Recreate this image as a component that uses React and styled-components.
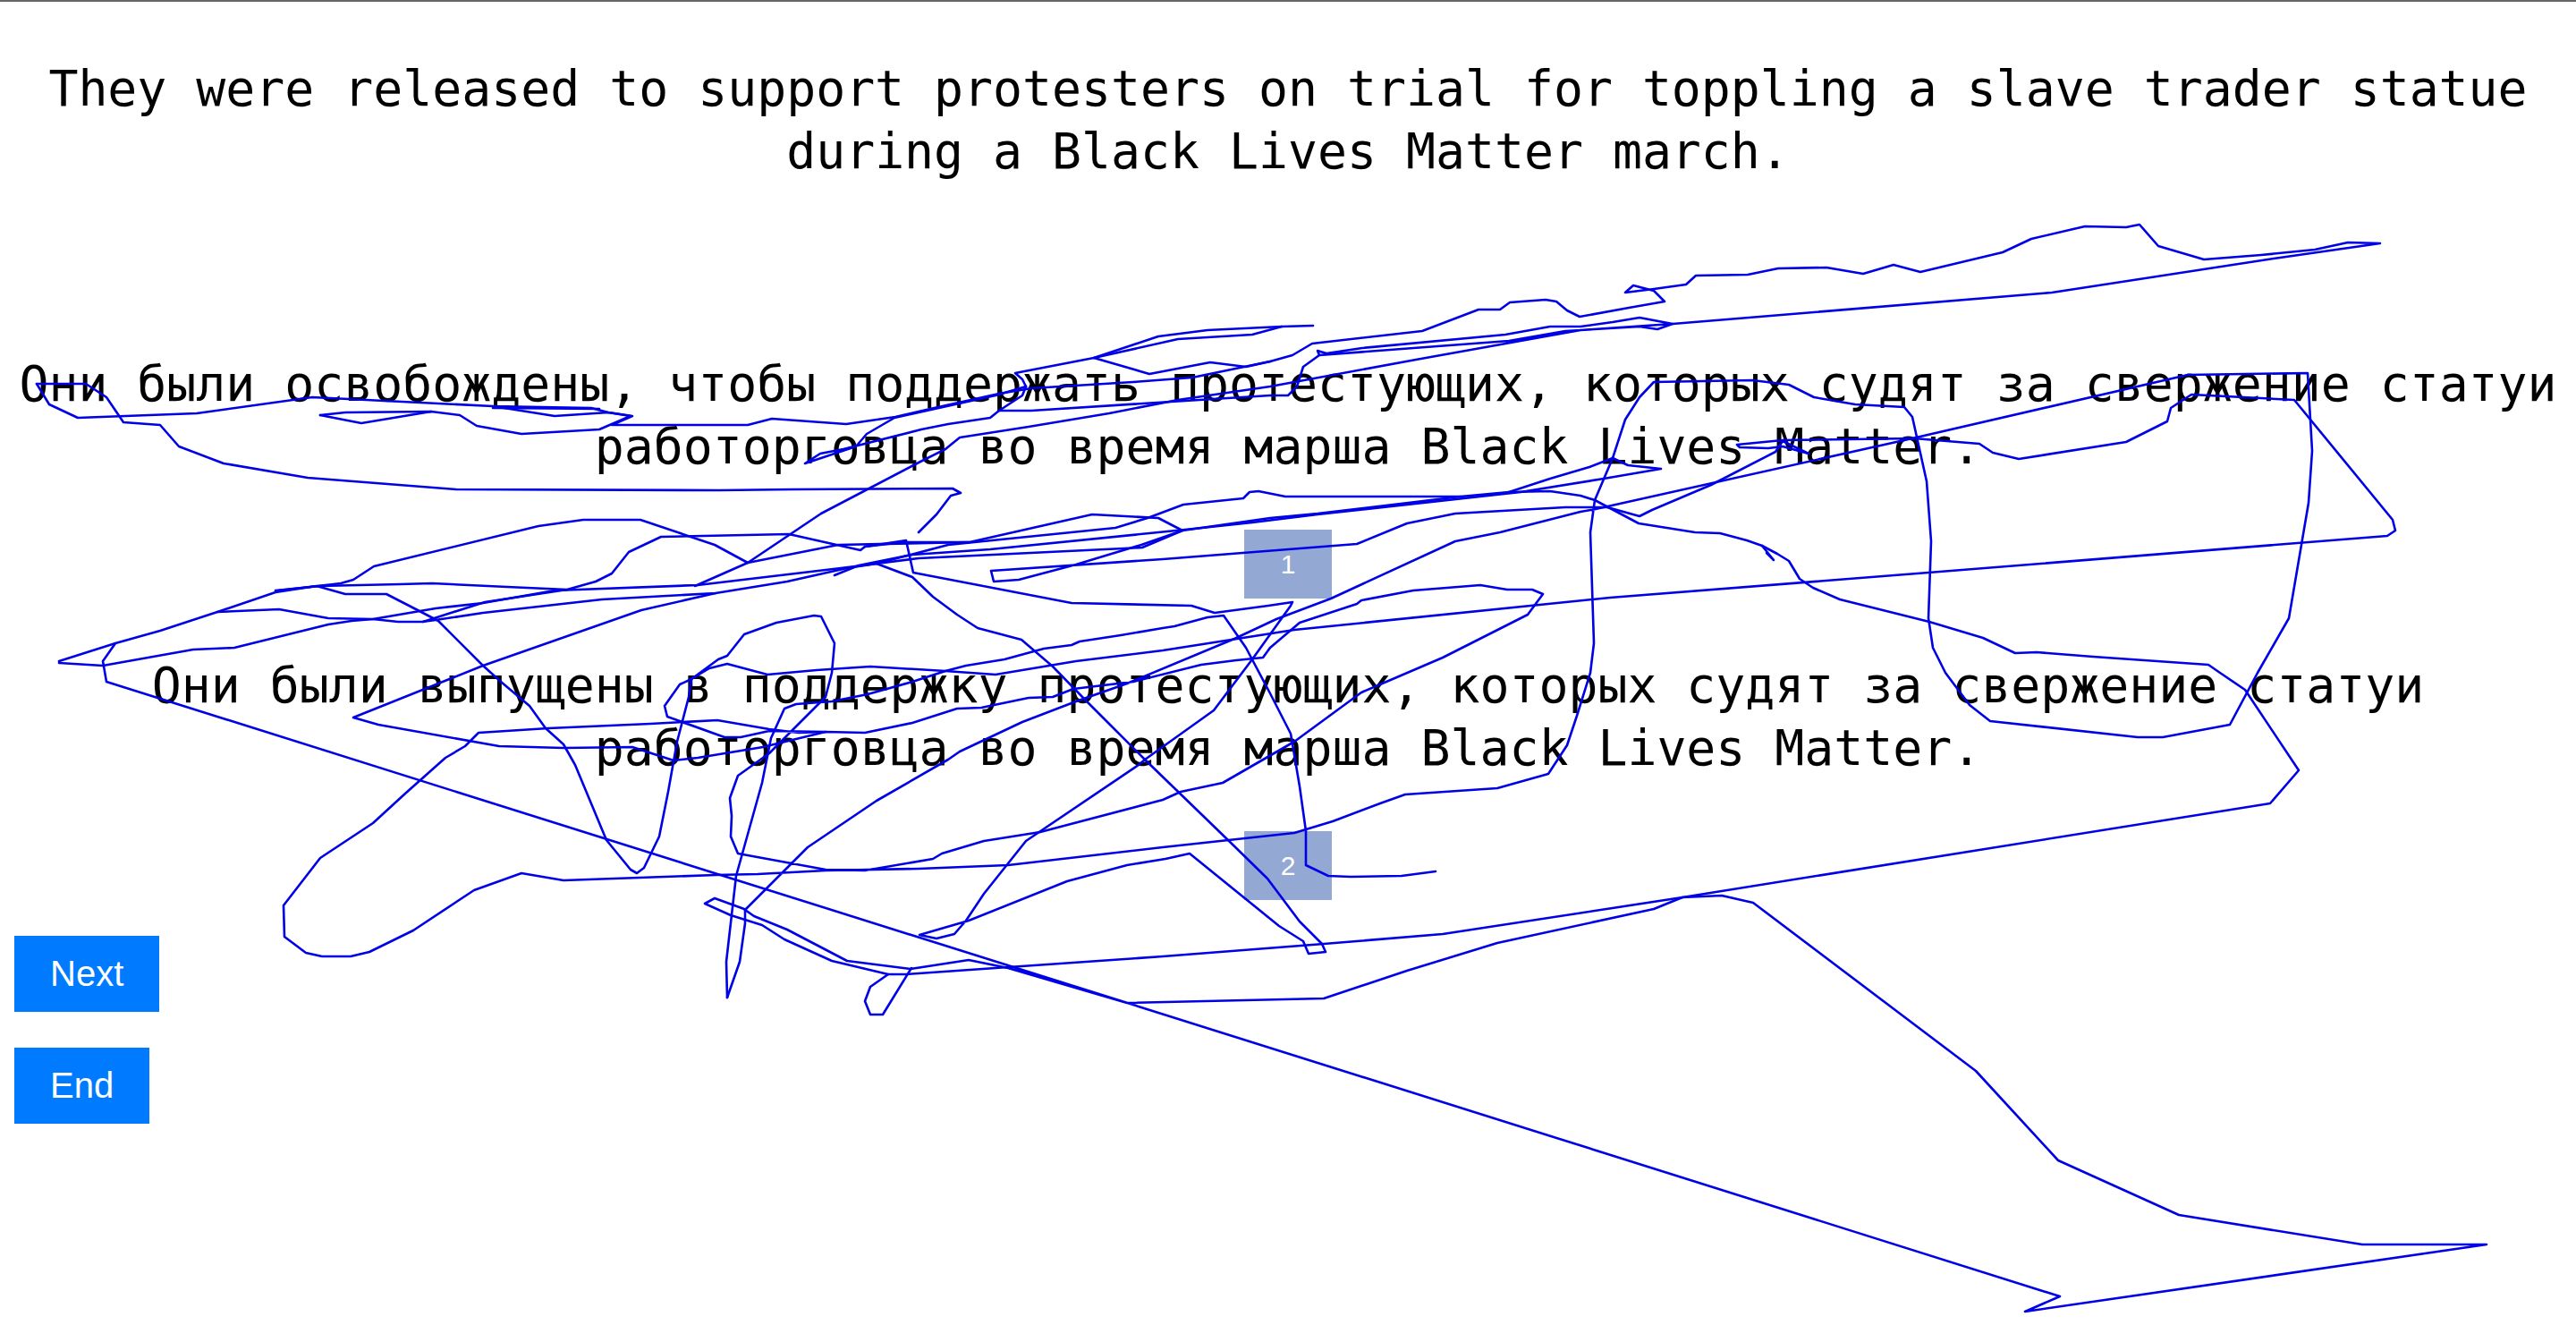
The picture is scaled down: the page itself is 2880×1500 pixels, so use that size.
import React from 'react';
import styled, { createGlobalStyle } from 'styled-components';

const GlobalStyle = createGlobalStyle`
    html,body{margin:0;padding:0;background:#fff;}
    #root{position:relative;min-height:1500px;}
`;

const Page = styled.div`
    position:relative;width:100%;height:1500px;overflow:hidden;border-top:2px solid #666;box-sizing:border-box;
    padding:62px 16px 0;font-family:"Liberation Sans",Arial,sans-serif;
`;
const Sentence = styled.p`
    margin:0;text-align:center;color:#000;
    font-family:"DejaVu Sans Mono",monospace;font-size:54.8px;line-height:70px;
    margin-top:${props => props.$top || 0}px;
`;
const NumberBox = styled.div`
    width:98px;height:77px;margin:${props => props.$top}px auto 0;display:flex;align-items:center;justify-content:center;
    background:#93a8d3;color:#fff;font-size:30px;
`;
const Buttons = styled.div`
    display:flex;flex-direction:column;align-items:flex-start;row-gap:40px;margin-top:40px;
`;
const Button = styled.button`
    border:0;margin:0;padding:20px 40px;height:85px;background:#007bff;color:#fff;
    font-family:"Liberation Sans",Arial,sans-serif;font-size:40px;
`;
const Drawing = styled.svg`
    position:absolute;left:0;top:0;width:2880px;height:1500px;pointer-events:none;
    & polyline{fill:none;stroke:#0000e6;stroke-width:2.6;stroke-linejoin:round;stroke-linecap:round;}
`;

const strokes = [
    "129,717 115,737 119,760 2303,1447 2264,1464 2780,1389 2641,1389 2436,1356 2301,1295 2209,1195 1960,1007 1925,999 1881,1001 1849,1014 1674,1052 1573,1083 1480,1114 1260,1119 1127,1080 1083,1071 1018,1081 947,1072 880,1037 843,1022 833,1015",
    "832,1014 799,1002 788,1008 817,1021 852,1032 877,1048 930,1072 993,1087 1013,1087 1113,1080 1300,1067 1480,1053 1613,1042 1881,1001 2538,896 2570,859 2510,769 2482,750 2469,741 2340,732 2277,727 2253,728 2217,711 2157,693 2057,668 2027,655 2012,645 2000,625 1987,617 1970,608 1953,602 1923,594 1895,593 1832,583 1783,557 1767,552 1733,547 1687,548 1633,553 1437,553 1407,547 1397,548 1390,555 1323,562 1283,577 1247,588 1060,607 980,628",
    "1970,608 1983,624 1975,616",
    "1803,510 1777,520 1733,533 1687,548",
    "1803,510 1820,518 1857,522 1793,533 1700,548 1473,573 1400,582 1325,590 1107,612 1020,618 960,630 933,641",
    "993,1087 973,1101 967,1117 973,1132 987,1132 1019,1080",
    "833,1015 903,945 980,893 1060,847 1073,838 1143,805 1203,782 1260,762 1380,712 1427,690 1488,667 1627,603 1677,593 1767,570 1784,567 2138,488 2446,417 2580,415 2585,502 2581,560 2559,689 2524,750 2493,808 2418,822 2390,822 2225,804 2202,786 2175,750 2161,722 2156,689 2159,603 2154,536 2138,464 2129,453 2074,450 2028,442 2000,428 1959,423 1849,425 1833,442 1817,467 1803,510 1783,557 1778,593 1782,717 1778,750 1763,798 1752,831 1731,863 1674,879 1571,886 1543,896 1490,916 1447,929 1300,945 1127,965 1027,969 923,971 847,975 800,976 630,982 583,974 530,993 462,1038 413,1062 392,1067 360,1067 342,1063 318,1045 317,1010 358,957 417,918 453,885 498,845 520,832 535,817 613,812 727,807 802,803 860,813 893,817 923,816 967,817 1020,806 1070,790 1097,789 1150,778 1177,777 1200,768 1267,760 1343,741 1382,736 1412,733 1420,722 1453,694 1517,673 1522,669 1580,658 1655,652 1685,657 1713,657 1725,662 1708,685 1613,733 1550,760 1522,772 1447,827 1367,873 1320,883 1300,892 1163,928 1100,938 1053,952 1043,958 967,971 923,970 825,952 817,933 818,910 816,890 825,865 860,840 923,777 930,750 933,717 918,687 910,686 868,694 832,707 813,731 803,735 773,757 760,763 743,787 746,799 810,822 828,822 860,815 923,816",
    "923,816 853,833 780,845 753,848 707,833 630,834 558,832 423,808 395,800 540,742 717,680 800,661",
    "813,1113 820,1093 827,1073 833,1030 833,1015",
    "813,1113 812,1073 823,977 852,873 862,823 877,790 890,785 930,782 970,774 1020,760 1057,748 1080,742 1123,735 1167,723 1198,719 1207,715 1253,708 1300,700 1313,698 1350,688 1368,686 1393,722 1420,773 1443,818 1453,877 1460,927 1460,965 1485,977 1510,978 1567,977 1605,972",
    "66,739 115,742 216,724 262,722 367,696 393,692 417,690 487,678 540,672 620,658 780,652 940,633 980,628 1027,622 1277,610 1322,591 1420,577 1473,572 1633,553",
    "243,682 312,679 367,689 417,690 445,693 472,693 487,691 540,683 673,668 800,661 880,648 947,633 980,628",
    "2022,505 1993,497 1977,499 1945,498 1942,495 1993,490 2140,488 2213,494 2228,504 2257,511 2377,492 2423,469 2427,454 2450,439 2565,445 2675,579 2678,591 2669,597 2156,638 1800,666 1447,702 1300,725 1203,737 1113,752 1057,748 973,743 913,747 858,752 813,740 793,745 773,757",
    "2022,505 1993,491 1985,503 1913,540 1847,568 1833,575 1797,565 1750,565 1627,572 1573,583 1517,606 1300,623 1108,636 1111,648 1139,646 1203,629 1276,607 1322,591 1295,577 1221,573 1084,604 1010,604 967,609",
    "980,628 1020,643 1043,665 1070,685 1093,700 1142,713 1177,743 1213,780 1240,807 1280,847 1373,937 1417,980 1453,1028 1478,1053 1482,1062 1463,1064 1457,1050 1430,1033 1330,952 1303,958 1260,965 1193,983 1083,1027 1028,1043 1047,1047 1067,1042 1080,1027 1100,997 1147,938 1273,853 1280,847 1357,792 1400,735 1443,675 1445,671 1418,675 1358,683 1332,675 1198,672 1021,638 1013,602 967,609 962,613 882,595 739,598 703,615 684,639 666,648 634,657 542,671 473,693",
    "66,737 129,717 179,703 243,682 308,660 354,653 386,662 432,662 467,680 490,692 540,742 560,760 592,787 610,812 630,830 643,853 678,937 705,970 712,974 720,968 737,933 747,883 757,827 770,777 773,757",
    "308,658 357,653 447,651 483,650 567,654 634,657",
    "777,653 836,627 937,607 1084,604",
    "312,658 381,650 395,646 418,631 602,586 652,579 716,579 799,607 836,627 918,572 1029,514 1057,500 1073,487 1150,475 1240,460 1317,445 1420,430 1583,400 1767,367 1870,360 1833,353 1803,358 1767,363 1733,363 1683,372 1523,387 1483,393 1473,390 1475,395 1687,379 1750,368 1833,363 1853,366 1870,360",
    "1475,395 1457,408 1450,430 1440,440 1420,440 1153,457 1117,457 1107,465 1060,472 1030,478 943,500 917,505 900,516 957,497 969,483 1000,465 1113,440 1147,430",
    "41,427 96,427 119,442 138,470 179,473 200,497 250,516 344,532 510,545 804,546 886,545 1065,544 1074,549 1063,552 1047,573 1027,593",
    "41,427 55,450 87,465 220,460 349,442 551,452 661,454 680,459 707,463 684,473 836,473 863,466 946,472 1001,464 1040,455 1117,438 1153,432 1267,425 1333,420 1420,402 1445,395 1467,382 1590,368 1653,344 1677,344 1688,336 1728,333 1740,335 1752,345 1766,352 1821,342 1861,335 1849,323 1826,317 1817,325 1849,321 1885,316 1896,306 1954,305 1988,298 2042,297 2083,304 2117,294 2147,302 2239,280 2271,265 2331,251 2377,252 2392,249 2413,273 2464,288 2528,283 2588,277 2625,269 2661,270 2542,287 2294,325 1870,360",
    "358,462 386,459 482,458 514,462 533,474 583,483 670,478 705,463 680,459 620,463 551,452",
    "358,462 404,471 482,458",
    "551,454 670,455",
    "1147,430 1143,422 1135,415 1223,398 1295,374 1350,367 1433,363 1468,362",
    "1147,430 1143,440 1117,457",
    "1223,398 1317,377 1400,372 1433,363",
    "1223,398 1285,416 1353,403 1393,408 1420,402",
];

const App = () => (
    <>
        <GlobalStyle />
        <Page>
            <Sentence>They were released to support protesters on trial for toppling a slave trader statue during a Black Lives Matter march.</Sentence>
            <Sentence $top={190}>Они были освобождены, чтобы поддержать протестующих, которых судят за свержение статуи работорговца во время марша Black Lives Matter.</Sentence>
            <NumberBox $top={58}>1</NumberBox>
            <Sentence $top={62}>Они были выпущены в поддержку протестующих, которых судят за свержение статуи работорговца во время марша Black Lives Matter.</Sentence>
            <NumberBox $top={58}>2</NumberBox>
            <Buttons>
                <Button>Next</Button>
                <Button>End</Button>
            </Buttons>
            <Drawing viewBox="0 0 2880 1500">
                {strokes.map((points, index) => (<polyline key={index} points={points} />))}
            </Drawing>
        </Page>
    </>
);

export default App;
